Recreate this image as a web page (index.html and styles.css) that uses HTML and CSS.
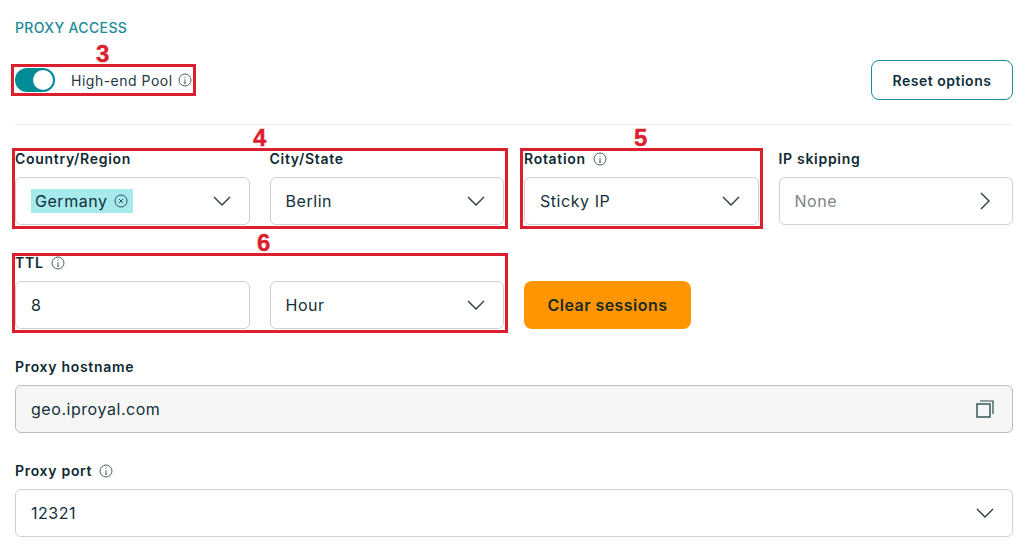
FILE: index.html
```html
<!DOCTYPE html>
<html lang="en">
<head>
<meta charset="utf-8">
<title>Proxy access</title>
<link rel="stylesheet" href="styles.css">
</head>
<body>
<svg class="defs" width="0" height="0" aria-hidden="true">
  <symbol id="info" viewBox="0 0 14 14"><circle cx="7" cy="7" r="6" fill="none" stroke="currentColor" stroke-width="1"/><path d="M7 6.2V10M6 10.2h2M7 3.8v1" fill="none" stroke="currentColor" stroke-width="1"/></symbol>
  <symbol id="chev" viewBox="0 0 18 10"><path d="M1 1l8 8 8-8" fill="none" stroke="currentColor" stroke-width="1.4"/></symbol>
</svg>
<main class="page">
  <h2 class="section-title">PROXY ACCESS</h2>
  <div class="top-row">
    <div class="toggle-group">
      <span class="toggle"><span class="knob"></span></span>
      <span class="toggle-label">High-end Pool</span>
      <svg class="info"><use href="#info"/></svg>
    </div>
    <button class="btn-outline">Reset options</button>
  </div>
  <div class="divider"></div>
  <div class="grid">
    <div class="field">
      <div class="label">Country/Region</div>
      <div class="control"><span class="tag">Germany <svg class="tag-x" viewBox="0 0 14 14"><circle cx="7" cy="7" r="6" fill="none" stroke="currentColor"/><path d="M5 5l4 4M9 5l-4 4" stroke="currentColor"/></svg></span><svg class="chev"><use href="#chev"/></svg></div>
    </div>
    <div class="field">
      <div class="label">City/State</div>
      <div class="control"><span>Berlin</span><svg class="chev"><use href="#chev"/></svg></div>
    </div>
    <div class="field">
      <div class="label">Rotation <svg class="info"><use href="#info"/></svg></div>
      <div class="control"><span>Sticky IP</span><svg class="chev"><use href="#chev"/></svg></div>
    </div>
    <div class="field">
      <div class="label">IP skipping</div>
      <div class="control muted"><span>None</span><svg class="chev-right" viewBox="0 0 10 18"><path d="M1 1l8 8-8 8" fill="none" stroke="currentColor" stroke-width="1.4"/></svg></div>
    </div>
    <div class="field">
      <div class="label">TTL <svg class="info"><use href="#info"/></svg></div>
      <div class="control"><span>8</span></div>
    </div>
    <div class="field">
      <div class="label">&nbsp;</div>
      <div class="control"><span>Hour</span><svg class="chev"><use href="#chev"/></svg></div>
    </div>
    <div class="field">
      <div class="label">&nbsp;</div>
      <button class="btn-primary">Clear sessions</button>
    </div>
  </div>
  <div class="field wide">
    <div class="label">Proxy hostname</div>
    <div class="control readonly"><span>geo.iproyal.com</span><svg class="copy" viewBox="0 0 18 18"><rect x="1" y="4" width="13" height="13" fill="none" stroke="currentColor" stroke-width="1.4"/><path d="M4 1h13v13" fill="none" stroke="currentColor" stroke-width="1.2"/></svg></div>
  </div>
  <div class="field wide">
    <div class="label">Proxy port <svg class="info"><use href="#info"/></svg></div>
    <div class="control"><span>12321</span><svg class="chev"><use href="#chev"/></svg></div>
  </div>
</main>
<div class="mark mark-3"></div><span class="num num-3">3</span>
<div class="mark mark-4"></div><span class="num num-4">4</span>
<div class="mark mark-5"></div><span class="num num-5">5</span>
<div class="mark mark-6"></div><span class="num num-6">6</span>
</body>
</html>
```
FILE: styles.css
```css
* { box-sizing: border-box; }
html, body { margin: 0; padding: 0; background: #fff; overflow: hidden; }
body { width: 1027px; height: 553px; position: relative; font-family: Inter, "Noto Sans", sans-serif; color: #0f2a33; }
.defs { position: absolute; }
.page { padding: 20px 14px 0 15px; }
.section-title { margin: 0; font-size: 14px; line-height: 16px; font-weight: 500; letter-spacing: .35px; color: #1c8b98; }
.top-row { display: flex; justify-content: space-between; align-items: center; margin-top: 24px; height: 40px; }
.toggle-group { display: flex; align-items: center; font-size: 14px; letter-spacing: .5px; color: #24383f; }
.toggle { width: 40px; height: 24px; border-radius: 12px; background: #008c95; padding: 2px; display: flex; justify-content: flex-end; }
.knob { width: 20px; height: 20px; border-radius: 50%; background: #fff; }
.toggle-label { margin-left: 16px; }
.info { width: 14px; height: 14px; color: #4c5f65; margin-left: 5px; vertical-align: -2px; }
.label .info { margin-left: 3px; }
.btn-outline { width: 142px; height: 40px; border: 1px solid #1c8b98; border-radius: 8px; background: #fff; font: 600 14px Inter, sans-serif; letter-spacing: .5px; color: #0f2f3d; }
.divider { height: 1px; background: #eeeeee; margin-top: 24px; }
.grid { display: grid; grid-template-columns: repeat(4, 1fr); gap: 20px 20px; margin-top: 16px; }
.grid .field:nth-child(7) { grid-column: 3; grid-row: 2; margin: 0; }
.label { height: 36px; padding-top: 10px; line-height: 16px; font-size: 14px; font-weight: 600; letter-spacing: .7px; color: #0f2a33; }
.control { height: 48px; border: 1px solid #cfcfcf; border-radius: 6px; background: #fff; display: flex; align-items: center; justify-content: space-between; padding: 0 18px 0 15px; font-size: 16px; letter-spacing: .55px; color: #12303a; }
.muted { color: #7d8487; }
.readonly { background: #f6f6f6; border-color: #bdbdbd; }
.wide { margin-top: 20px; }
.tag { display: inline-flex; align-items: center; height: 24px; background: #a6eaee; padding: 0 5px 0 4px; }
.tag-x { width: 14px; height: 14px; margin-left: 6px; color: #33505a; }
.chev { width: 18px; height: 10px; color: #2b3d43; }
.chev-right { width: 10px; height: 18px; color: #2b3d43; margin-right: 4px; }
.copy { width: 18px; height: 18px; color: #2d4a4d; }
.btn-primary { display: block; width: 167px; height: 48px; border: 0; border-radius: 8px; background: #ff9500; font: 600 16px Inter, sans-serif; letter-spacing: .45px; color: #1b2b22; }
.mark { position: absolute; border: 3px solid #dc1f2e; }
.mark-3 { left: 11px; top: 64px; width: 185px; height: 32px; }
.mark-4 { left: 12px; top: 148px; width: 496px; height: 81px; }
.mark-5 { left: 520px; top: 148px; width: 243px; height: 81px; }
.mark-6 { left: 12px; top: 253px; width: 496px; height: 80px; }
.num { position: absolute; font: 700 24px/24px "Liberation Sans", sans-serif; color: #dc1f2e; -webkit-text-stroke: .4px #dc1f2e; }
.num-3 { left: 96px; top: 42px; }
.num-4 { left: 253px; top: 126px; }
.num-5 { left: 634px; top: 126px; }
.num-6 { left: 257px; top: 231px; }
```
